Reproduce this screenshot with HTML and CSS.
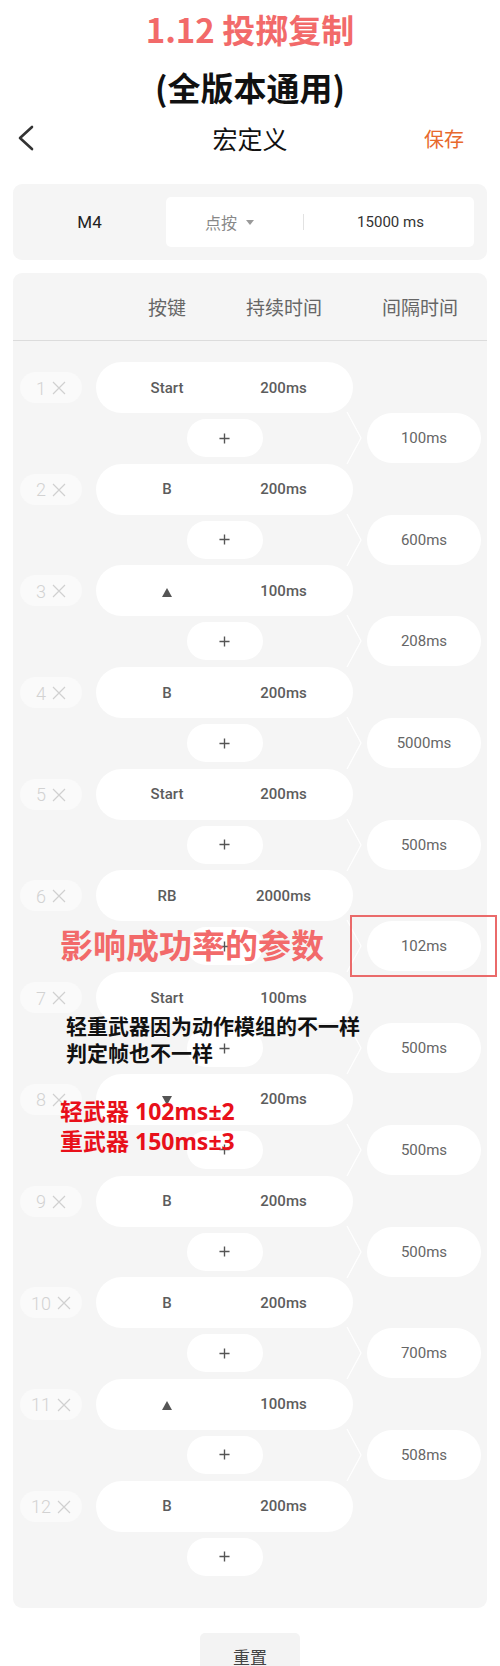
FILE: index.html
```html
<!DOCTYPE html>
<html lang="zh-CN">
<head>
<meta charset="utf-8">
<title>宏定义</title>
<link rel="stylesheet" href="styles.css">
</head>
<body>
<div class="page">
  <h1 class="title"><span class="t-red">1.12 投掷复制</span><span class="t-black">(全版本通用)</span></h1>

  <div class="nav">
    <svg class="back" width="20" height="26" viewBox="0 0 20 26"><polyline points="15,2 3,13 15,24" fill="none" stroke="#333" stroke-width="2.6" stroke-linecap="round" stroke-linejoin="round"/></svg>
    <div class="nav-title">宏定义</div>
    <div class="save">保存</div>
  </div>

  <section class="card head-card">
    <div class="macro-name">M4</div>
    <div class="mode-box">
      <div class="mode"><span>点按</span><i class="caret"></i></div>
      <i class="vsep"></i>
      <div class="total">15000 ms</div>
    </div>
  </section>

  <section class="card list-card">
    <div class="list-head"><span class="h1">按键</span><span class="h2">持续时间</span><span class="h3">间隔时间</span></div>
    <div class="steps">

      <div class="step">
        <div class="chip"><span>1</span><svg class="x" viewBox="0 0 14 14"><path d="M1 1L13 13M13 1L1 13"/></svg></div>
        <div class="key-pill"><span class="k">Start</span><span class="d">200ms</span></div>
        <div class="plus"><svg viewBox="0 0 12 12"><path d="M6 0.5V11.5M0.5 6H11.5"/></svg></div>
        <svg class="bracket" viewBox="0 0 16 54"><polyline points="1,1 15,27 1,53"/></svg>
        <div class="gap-pill">100ms</div>
      </div>

      <div class="step">
        <div class="chip"><span>2</span><svg class="x" viewBox="0 0 14 14"><path d="M1 1L13 13M13 1L1 13"/></svg></div>
        <div class="key-pill"><span class="k">B</span><span class="d">200ms</span></div>
        <div class="plus"><svg viewBox="0 0 12 12"><path d="M6 0.5V11.5M0.5 6H11.5"/></svg></div>
        <svg class="bracket" viewBox="0 0 16 54"><polyline points="1,1 15,27 1,53"/></svg>
        <div class="gap-pill">600ms</div>
      </div>

      <div class="step">
        <div class="chip"><span>3</span><svg class="x" viewBox="0 0 14 14"><path d="M1 1L13 13M13 1L1 13"/></svg></div>
        <div class="key-pill"><span class="k"><i class="tri up"></i></span><span class="d">100ms</span></div>
        <div class="plus"><svg viewBox="0 0 12 12"><path d="M6 0.5V11.5M0.5 6H11.5"/></svg></div>
        <svg class="bracket" viewBox="0 0 16 54"><polyline points="1,1 15,27 1,53"/></svg>
        <div class="gap-pill">208ms</div>
      </div>

      <div class="step">
        <div class="chip"><span>4</span><svg class="x" viewBox="0 0 14 14"><path d="M1 1L13 13M13 1L1 13"/></svg></div>
        <div class="key-pill"><span class="k">B</span><span class="d">200ms</span></div>
        <div class="plus"><svg viewBox="0 0 12 12"><path d="M6 0.5V11.5M0.5 6H11.5"/></svg></div>
        <svg class="bracket" viewBox="0 0 16 54"><polyline points="1,1 15,27 1,53"/></svg>
        <div class="gap-pill">5000ms</div>
      </div>

      <div class="step">
        <div class="chip"><span>5</span><svg class="x" viewBox="0 0 14 14"><path d="M1 1L13 13M13 1L1 13"/></svg></div>
        <div class="key-pill"><span class="k">Start</span><span class="d">200ms</span></div>
        <div class="plus"><svg viewBox="0 0 12 12"><path d="M6 0.5V11.5M0.5 6H11.5"/></svg></div>
        <svg class="bracket" viewBox="0 0 16 54"><polyline points="1,1 15,27 1,53"/></svg>
        <div class="gap-pill">500ms</div>
      </div>

      <div class="step">
        <div class="chip"><span>6</span><svg class="x" viewBox="0 0 14 14"><path d="M1 1L13 13M13 1L1 13"/></svg></div>
        <div class="key-pill"><span class="k">RB</span><span class="d">2000ms</span></div>
        <div class="plus"><svg viewBox="0 0 12 12"><path d="M6 0.5V11.5M0.5 6H11.5"/></svg></div>
        <svg class="bracket" viewBox="0 0 16 54"><polyline points="1,1 15,27 1,53"/></svg>
        <div class="gap-pill">102ms</div>
      </div>

      <div class="step">
        <div class="chip"><span>7</span><svg class="x" viewBox="0 0 14 14"><path d="M1 1L13 13M13 1L1 13"/></svg></div>
        <div class="key-pill"><span class="k">Start</span><span class="d">100ms</span></div>
        <div class="plus"><svg viewBox="0 0 12 12"><path d="M6 0.5V11.5M0.5 6H11.5"/></svg></div>
        <svg class="bracket" viewBox="0 0 16 54"><polyline points="1,1 15,27 1,53"/></svg>
        <div class="gap-pill">500ms</div>
      </div>

      <div class="step">
        <div class="chip"><span>8</span><svg class="x" viewBox="0 0 14 14"><path d="M1 1L13 13M13 1L1 13"/></svg></div>
        <div class="key-pill"><span class="k"><i class="tri down"></i></span><span class="d">200ms</span></div>
        <div class="plus"><svg viewBox="0 0 12 12"><path d="M6 0.5V11.5M0.5 6H11.5"/></svg></div>
        <svg class="bracket" viewBox="0 0 16 54"><polyline points="1,1 15,27 1,53"/></svg>
        <div class="gap-pill">500ms</div>
      </div>

      <div class="step">
        <div class="chip"><span>9</span><svg class="x" viewBox="0 0 14 14"><path d="M1 1L13 13M13 1L1 13"/></svg></div>
        <div class="key-pill"><span class="k">B</span><span class="d">200ms</span></div>
        <div class="plus"><svg viewBox="0 0 12 12"><path d="M6 0.5V11.5M0.5 6H11.5"/></svg></div>
        <svg class="bracket" viewBox="0 0 16 54"><polyline points="1,1 15,27 1,53"/></svg>
        <div class="gap-pill">500ms</div>
      </div>

      <div class="step">
        <div class="chip"><span>10</span><svg class="x" viewBox="0 0 14 14"><path d="M1 1L13 13M13 1L1 13"/></svg></div>
        <div class="key-pill"><span class="k">B</span><span class="d">200ms</span></div>
        <div class="plus"><svg viewBox="0 0 12 12"><path d="M6 0.5V11.5M0.5 6H11.5"/></svg></div>
        <svg class="bracket" viewBox="0 0 16 54"><polyline points="1,1 15,27 1,53"/></svg>
        <div class="gap-pill">700ms</div>
      </div>

      <div class="step">
        <div class="chip"><span>11</span><svg class="x" viewBox="0 0 14 14"><path d="M1 1L13 13M13 1L1 13"/></svg></div>
        <div class="key-pill"><span class="k"><i class="tri up"></i></span><span class="d">100ms</span></div>
        <div class="plus"><svg viewBox="0 0 12 12"><path d="M6 0.5V11.5M0.5 6H11.5"/></svg></div>
        <svg class="bracket" viewBox="0 0 16 54"><polyline points="1,1 15,27 1,53"/></svg>
        <div class="gap-pill">508ms</div>
      </div>

      <div class="step last">
        <div class="chip"><span>12</span><svg class="x" viewBox="0 0 14 14"><path d="M1 1L13 13M13 1L1 13"/></svg></div>
        <div class="key-pill"><span class="k">B</span><span class="d">200ms</span></div>
        <div class="plus"><svg viewBox="0 0 12 12"><path d="M6 0.5V11.5M0.5 6H11.5"/></svg></div>
      </div>

    </div>
  </section>

  <div class="reset-wrap"><button class="reset" type="button">重置</button></div>

  <div class="note note-main">影响成功率的参数</div>
  <div class="note-box"></div>
  <div class="note note-black">轻重武器因为动作模组的不一样<br>判定帧也不一样</div>
  <div class="note note-red">轻武器 102ms±2<br>重武器 150ms±3</div>
</div>
</body>
</html>
```

FILE: styles.css
```css
* { box-sizing: border-box; }

html, body {
  margin: 0;
  padding: 0;
  background: #ffffff;
}

body {
  font-family: Roboto, "Noto Sans CJK SC", "Noto Sans", sans-serif;
  color: #333;
}

.page {
  position: relative;
  width: 500px;
}

/* Title */
.title {
  margin: 0;
  font-family: "Noto Sans CJK SC", "Noto Sans", sans-serif;
  font-size: 33px;
  font-weight: 700;
  line-height: 58px;
  text-align: center;
}
.title span { display: block; }
.t-red { color: #f26a6a; }
.t-black { color: #111; }

/* Nav */
.nav {
  height: 44px;
  display: flex;
  align-items: center;
  position: relative;
  padding: 0 16px;
}
.back {
  display: block;
  margin-left: 1px;
}
.nav-title {
  position: absolute;
  left: 0;
  right: 0;
  text-align: center;
  font-family: "Noto Sans CJK SC", sans-serif;
  font-size: 25px;
  color: #111;
  pointer-events: none;
}
.save {
  margin-left: auto;
  margin-right: 20px;
  font-family: "Noto Sans CJK SC", sans-serif;
  font-size: 20px;
  color: #e8692c;
}

/* Cards */
.card {
  margin: 0 13px;
  background: #f5f5f5;
  border-radius: 9px;
}

.head-card {
  margin-top: 24px;
  height: 76px;
  display: flex;
  align-items: center;
  padding: 13px 13px 13px 0;
}
.macro-name {
  width: 153px;
  text-align: center;
  font-size: 17px;
  color: #222;
}
.mode-box {
  flex: 1;
  height: 50px;
  background: #fff;
  border-radius: 5px;
  display: flex;
  align-items: center;
}
.mode {
  width: 137px;
  display: flex;
  align-items: center;
  justify-content: center;
  padding-right: 10px;
  font-family: "Noto Sans CJK SC", sans-serif;
  font-size: 16px;
  color: #888;
}
.caret {
  width: 0;
  height: 0;
  margin-left: 9px;
  border-left: 4.5px solid transparent;
  border-right: 4.5px solid transparent;
  border-top: 5px solid #9a9a9a;
}
.vsep {
  width: 1px;
  height: 16px;
  background: #e2e2e2;
}
.total {
  flex: 1;
  text-align: center;
  font-size: 15px;
  color: #333;
  padding-left: 3px;
}

.list-card {
  margin-top: 13px;
}
.list-head {
  height: 68px;
  display: flex;
  align-items: center;
  border-bottom: 1px solid #dcdcdc;
  padding-left: 104px;
  font-family: "Noto Sans CJK SC", sans-serif;
  font-size: 19px;
  color: #666;
}
.list-head span {
  width: 100px;
  text-align: center;
}
.list-head .h2 { margin-left: 17px; }
.list-head .h3 { margin-left: 36px; }

.steps {
  padding: 21px 6px 32px 7px;
}
.step {
  display: grid;
  grid-template-columns: 62px 257px 114px;
  grid-template-rows: 51px 38px;
  column-gap: 14px;
  row-gap: 6px;
  margin-bottom: 6.7px;
}
.step.last { margin-bottom: 0; }

.chip {
  grid-row: 1;
  grid-column: 1;
  align-self: center;
  height: 31px;
  border-radius: 16px;
  background: #fafafa;
  display: flex;
  align-items: center;
  justify-content: center;
  gap: 6px;
  font-size: 18px;
  font-weight: 300;
  color: #d2d2d2;
  padding-top: 1px;
}
.chip .x {
  width: 14px;
  height: 14px;
  fill: none;
  stroke: #d0d0d0;
  stroke-width: 1.2;
}

.key-pill {
  grid-row: 1;
  grid-column: 2;
  background: #fff;
  border-radius: 26px;
  display: flex;
  align-items: center;
  padding-left: 21px;
  font-size: 15px;
  font-weight: 500;
  color: #5c5c5c;
}
.key-pill span {
  width: 100px;
  text-align: center;
  display: flex;
  justify-content: center;
  align-items: center;
}
.key-pill .d { margin-left: 16.5px; }

.tri {
  width: 0;
  height: 0;
  border-left: 5px solid transparent;
  border-right: 5px solid transparent;
}
.tri.up {
  border-bottom: 9px solid #555;
  margin-top: 3px;
}
.tri.down {
  border-top: 9px solid #555;
  margin-top: 2px;
}

.plus {
  grid-row: 2;
  grid-column: 2;
  justify-self: center;
  width: 76px;
  height: 38px;
  border-radius: 19px;
  background: #fff;
  display: flex;
  align-items: center;
  justify-content: center;
}
.plus svg {
  width: 11px;
  height: 11px;
  fill: none;
  stroke: #555;
  stroke-width: 1.5;
}

.bracket {
  grid-row: 2;
  grid-column: 2;
  justify-self: end;
  align-self: center;
  width: 16px;
  height: 54px;
  margin-right: -9px;
  fill: none;
  stroke: #ffffff;
  stroke-width: 1.4;
  opacity: 0.9;
}

.gap-pill {
  grid-row: 2;
  grid-column: 3;
  align-self: center;
  height: 50px;
  border-radius: 25px;
  background: #fff;
  display: flex;
  align-items: center;
  justify-content: center;
  font-size: 15px;
  color: #666;
}

/* Reset */
.reset-wrap {
  display: flex;
  justify-content: center;
  margin-top: 25px;
}
.reset {
  width: 100px;
  height: 48px;
  border: none;
  border-radius: 5px;
  background: #f3f3f3;
  font-family: "Noto Sans CJK SC", sans-serif;
  font-size: 17px;
  color: #444;
  padding: 0;
}

/* Annotations drawn over the screenshot */
.note {
  position: absolute;
  font-family: "Noto Sans CJK SC", "Noto Sans", sans-serif;
  font-weight: 700;
  white-space: nowrap;
}
.note-main {
  left: 60px;
  top: 924px;
  font-size: 33px;
  line-height: 40px;
  color: #f26a6a;
}
.note-box {
  position: absolute;
  left: 350px;
  top: 915px;
  width: 147px;
  height: 62px;
  border: 2px solid #ea6a6a;
}
.note-black {
  left: 66px;
  top: 1012px;
  font-size: 21px;
  line-height: 27px;
  color: #111;
}
.note-red {
  left: 60px;
  top: 1096px;
  font-size: 23px;
  line-height: 30px;
  color: #e8101a;
  font-family: "Noto Sans", "Noto Sans CJK SC", sans-serif;
}
```
